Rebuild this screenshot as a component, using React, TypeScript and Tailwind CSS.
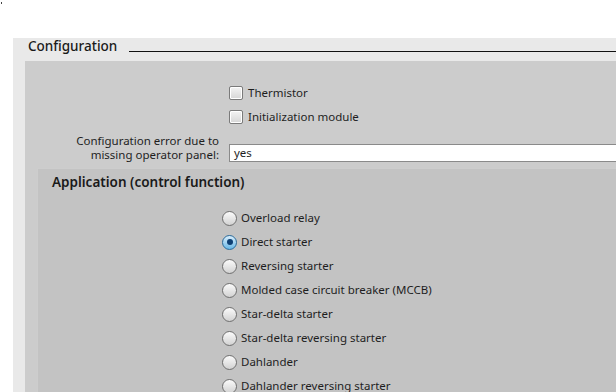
const font = { fontFamily: '"Noto Sans", "Open Sans", sans-serif' };

function Checkbox({ label }: { label: string }) {
  return (
    <div className="flex h-[24px] items-center gap-[5px]">
      <span className="h-[14px] w-[14px] rounded-[2px] border border-[#7a7a7a] bg-gradient-to-b from-[#f4f4f4] to-[#d6d6d6] shadow-[inset_0_0_0_1px_#fff]" />
      <span className="text-[11.5px] text-[#1e1e1e]">{label}</span>
    </div>
  );
}

function Radio({ label, checked }: { label: string; checked?: boolean }) {
  return (
    <div className="flex h-[24px] items-center gap-[4px]">
      {checked ? (
        <span className="flex h-[15px] w-[15px] items-center justify-center rounded-full border border-[#2a6a9a] bg-gradient-to-b from-[#d9eefb] to-[#66b7e6]">
          <span className="h-[6px] w-[6px] rounded-full bg-[#0d3f73]" />
        </span>
      ) : (
        <span className="h-[15px] w-[15px] rounded-full border border-[#6f6f6f] bg-gradient-to-b from-[#fbfbfb] to-[#d2d2d2]" />
      )}
      <span className="text-[11.5px] text-[#1e1e1e]">{label}</span>
    </div>
  );
}

const options = [
  'Overload relay',
  'Direct starter',
  'Reversing starter',
  'Molded case circuit breaker (MCCB)',
  'Star-delta starter',
  'Star-delta reversing starter',
  'Dahlander',
  'Dahlander reversing starter',
];

export default function App() {
  return (
    <div className="relative h-[392px] w-[616px] overflow-hidden bg-white pl-[13px] pt-[38px]" style={font}>
      <span className="absolute left-[1px] top-[2px] h-[2px] w-[1px] bg-[#444]" />
      <div className="flex h-full flex-col bg-[#e9e9e9]">
        <div className="flex h-[23px] shrink-0 items-center gap-[12px] pb-[6px] pl-[15px]">
          <span className="text-[13.5px] font-medium text-[#1a1a1a]">Configuration</span>
          <span className="mt-[9px] h-px flex-1 bg-[#111]" />
        </div>
        <div className="ml-[12px] flex-1 bg-[#cccccc] pt-[20px]">
          <div className="grid grid-cols-[194px_1fr] gap-x-[10px]">
            <div />
            <div>
              <Checkbox label="Thermistor" />
              <Checkbox label="Initialization module" />
            </div>
            <div className="mt-[5px] text-right text-[11.5px] leading-[14px] text-[#1e1e1e]">
              Configuration error due to
              <br />
              missing operator panel:
            </div>
            <div className="mt-[5px] flex items-end">
              <div className="flex h-[18px] w-full items-center border-y border-l border-[#8a8a8a] bg-white pl-[4px] text-[11.5px] text-[#1e1e1e]">
                yes
              </div>
            </div>
          </div>
          <div className="ml-[12px] mt-[6px] h-full border-l border-t border-[#cdcdcd] bg-[#c3c3c3]">
            <div className="flex h-[27px] items-center pl-[14px] text-[13.5px] font-semibold text-[#1a1a1a]">
              Application (control function)
            </div>
            <div className="mt-[10px] pl-[184px]">
              {options.map((o, i) => (
                <Radio key={o} label={o} checked={i === 1} />
              ))}
            </div>
          </div>
        </div>
      </div>
    </div>
  );
}
